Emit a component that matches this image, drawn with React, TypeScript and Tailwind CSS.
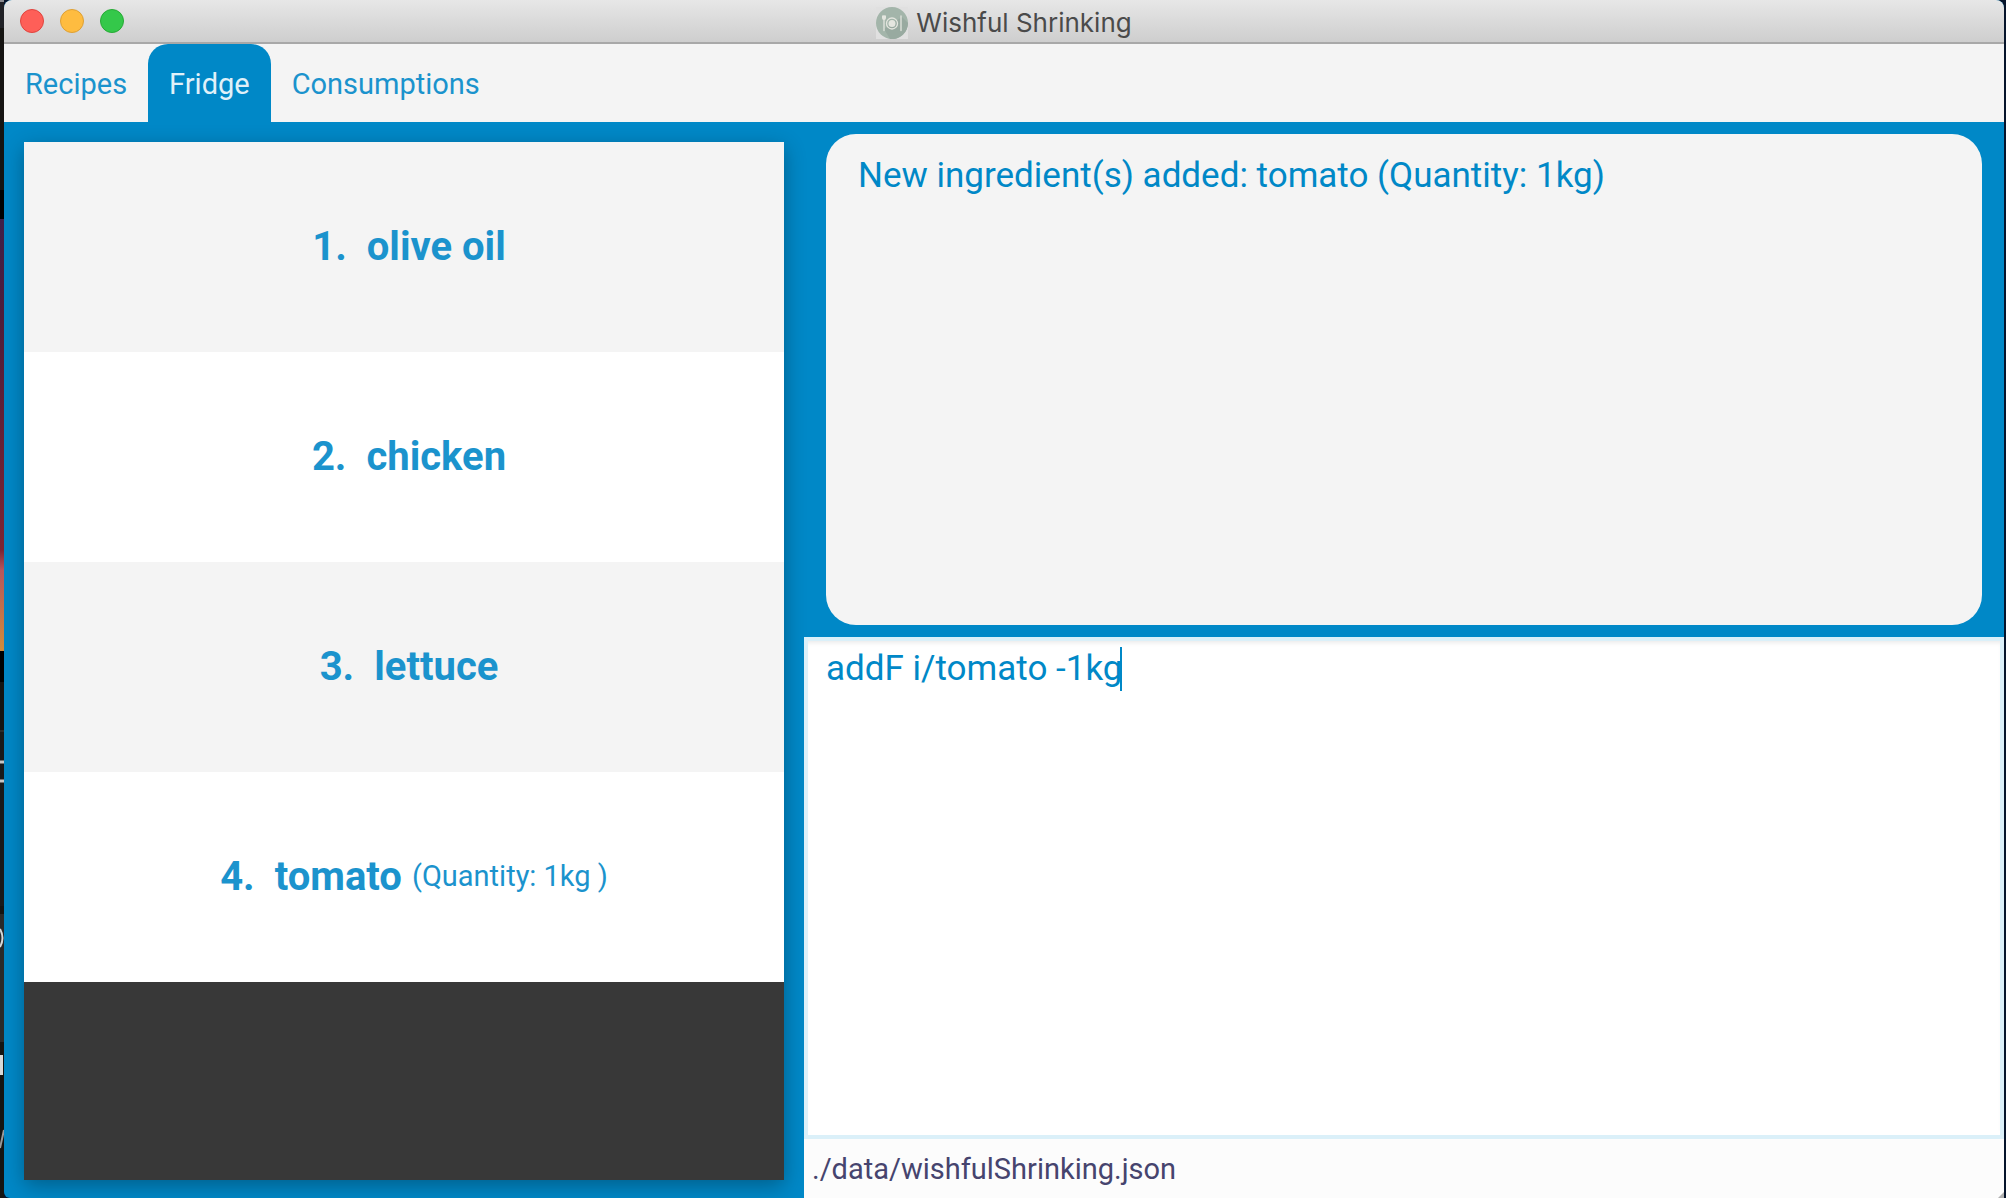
import React, { useState } from "react";

const ingredients = [
  { name: "olive oil", quantity: "" },
  { name: "chicken", quantity: "" },
  { name: "lettuce", quantity: "" },
  { name: "tomato", quantity: "(Quantity: 1kg )" },
];

const tabs = ["Recipes", "Fridge", "Consumptions"];

function AppIcon() {
  return (
    <svg viewBox="0 0 32 32" className="size-8" aria-hidden="true">
      <rect width="32" height="32" fill="#e0e0e0" />
      <circle cx="16" cy="16" r="16" fill="#a3b5aa" />
      <path d="M8 22 L26 10 L32 16 A16 16 0 0 1 14 32 Z" fill="#98aaa0" />
      <circle cx="16" cy="16.500" r="5.500" fill="none" stroke="#e4e6df" strokeWidth="1.300" />
      <circle cx="16" cy="16.500" r="3.500" fill="#e4e6df" />
      <path d="M8 9v14.500M25 9v14.500" stroke="#e4e6df" strokeWidth="1.300" strokeLinecap="round" />
      <path d="M6 8.500h4v2.500a2 2 0 0 1-4 0z" fill="#e4e6df" />
    </svg>
  );
}

/* Sliver of the desktop and other windows that shows at the left edge. */
function DesktopEdge() {
  return (
    <svg
      viewBox="0 0 4 1198"
      preserveAspectRatio="none"
      className="h-full w-full"
      aria-hidden="true"
    >
      <defs>
        <linearGradient id="dusk" x1="0" y1="0" x2="0" y2="1">
          <stop offset="0" stopColor="#3f2048" />
          <stop offset="0.3" stopColor="#4f1d3a" />
          <stop offset="1" stopColor="#7c2433" />
        </linearGradient>
        <linearGradient id="glow" x1="0" y1="0" x2="0" y2="1">
          <stop offset="0" stopColor="#7c2433" />
          <stop offset="0.2" stopColor="#b5575c" />
          <stop offset="1" stopColor="#cf8c3c" />
        </linearGradient>
      </defs>
      <rect width="4" height="1198" fill="#151412" />
      <rect width="4" height="2" fill="#8b8b90" />
      <rect y="2" width="4" height="26" fill="#202126" />
      <rect y="190" width="4" height="29" fill="#000" />
      <rect y="219" width="4" height="331" fill="url(#dusk)" />
      <rect y="550" width="4" height="101" fill="url(#glow)" />
      <rect y="651" width="4" height="31" fill="#000" />
      <rect y="730" width="4" height="2" fill="#2c2c2c" />
      <rect y="732" width="4" height="174" fill="#1a1a1a" />
      <rect y="914" width="4" height="128" fill="#2a2a2a" />
      <path d="M0 762h4M0 781h4" stroke="#c8c8c8" strokeWidth="3" />
      <path d="M0 929q5 9 0 18" fill="none" stroke="#d8d8d8" strokeWidth="2" />
      <rect y="1055" width="3" height="20" fill="#d8d8d8" />
      <path d="M0 1148L4 1130" stroke="#9a9a9a" strokeWidth="2" />
    </svg>
  );
}

function TitleBar() {
  return (
    <header className="relative flex h-11 shrink-0 items-center justify-center border-b-2 border-[#a8a8a8] bg-linear-to-b from-[#e7e7e7] to-[#cecece]">
      <div className="absolute left-4 flex gap-4">
        <button aria-label="Close" className="size-6 rounded-full border border-[#e0443e] bg-[#fe5f58]" />
        <button aria-label="Minimize" className="size-6 rounded-full border border-[#dea034] bg-[#febc40]" />
        <button aria-label="Zoom" className="size-6 rounded-full border border-[#27aa35] bg-[#34c84a]" />
      </div>
      <div className="flex items-center gap-2 pt-1">
        <AppIcon />
        <h1 className="font-[Inter,sans-serif] text-[26px] leading-8 text-[#4a4a4a]">Wishful Shrinking</h1>
      </div>
    </header>
  );
}

function CommandBox() {
  const [command, setCommand] = useState("addF i/tomato -1kg");
  const [focused, setFocused] = useState(false);
  return (
    <div className="relative flex min-h-0 flex-1 border-4 border-[#dbf0f9] bg-white pb-1">
      <textarea
        aria-label="Command"
        spellCheck={false}
        value={command}
        onChange={(e) => setCommand(e.target.value)}
        onFocus={() => setFocused(true)}
        onBlur={() => setFocused(false)}
        className="flex-1 resize-none px-[18px] py-1.5 text-[35px] leading-11 text-[#0088c7] shadow-[inset_0_4px_4px_-2px_rgba(0,0,0,0.08)] outline-none"
      />
      {!focused && <div className="absolute top-1.5 left-[312px] h-11 w-0.5 bg-[#0088c7]" />}
    </div>
  );
}

export default function App() {
  const [active, setActive] = useState("Fridge");
  return (
    <div className="flex h-screen bg-[#06142b] pr-0.5 font-[Roboto,sans-serif]">
      <div className="w-1 shrink-0">
        <DesktopEdge />
      </div>
      <div className="flex min-w-0 flex-1 flex-col overflow-hidden rounded-t-lg rounded-bl-md bg-[#0088c7]">
        <TitleBar />
        <nav className="flex h-[78px] shrink-0 bg-[#f4f4f4]" role="tablist">
          {tabs.map((tab) => (
            <button
              key={tab}
              role="tab"
              aria-selected={tab === active}
              onClick={() => setActive(tab)}
              className={
                tab === active
                  ? "rounded-t-[20px] bg-[#0088c7] px-[21px] pt-1 text-[29px] text-[#e0f1f9]"
                  : "px-[21px] pt-1 text-[29px] text-[#1b93cd]"
              }
            >
              {tab}
            </button>
          ))}
        </nav>
        <main className="flex min-h-0 flex-1">
          <section className="flex w-2/5 shrink-0 px-5 pt-5 pb-[18px]">
            <ol className="flex-1 bg-[#383838] shadow-[0_6px_20px_rgba(0,0,0,0.3)]">
              {ingredients.map((item, i) => (
                <li
                  key={item.name}
                  className="flex h-[210px] items-center justify-center pl-5 text-[#1b93cd] odd:bg-[#f4f4f4] even:bg-white"
                >
                  <span className="mr-5 text-[40px] font-bold">{i + 1}.</span>
                  <span className="text-[40px] font-bold">{item.name}</span>
                  <span className="ml-2.5 text-[29px]">{item.quantity}</span>
                </li>
              ))}
            </ol>
          </section>
          <section className="flex min-w-0 flex-1 flex-col">
            <div className="flex flex-1 px-[22px] py-3">
              <output className="flex-1 rounded-[30px] bg-[#f4f4f4] px-8 py-5 text-[35px] leading-11 text-[#0088c7]">
                New ingredient(s) added: tomato (Quantity: 1kg)
              </output>
            </div>
            <CommandBox />
            <footer className="relative flex h-[59px] shrink-0 items-center bg-[#fcfcfc] px-2 pt-0.5 text-[29px] text-[#46446e]">
              ./data/wishfulShrinking.json
              <svg viewBox="0 0 6 6" className="absolute right-0 bottom-0 size-1.5" aria-hidden="true">
                <path d="M6 0V6H0Z" fill="#b0b0b0" />
              </svg>
            </footer>
          </section>
        </main>
      </div>
    </div>
  );
}
